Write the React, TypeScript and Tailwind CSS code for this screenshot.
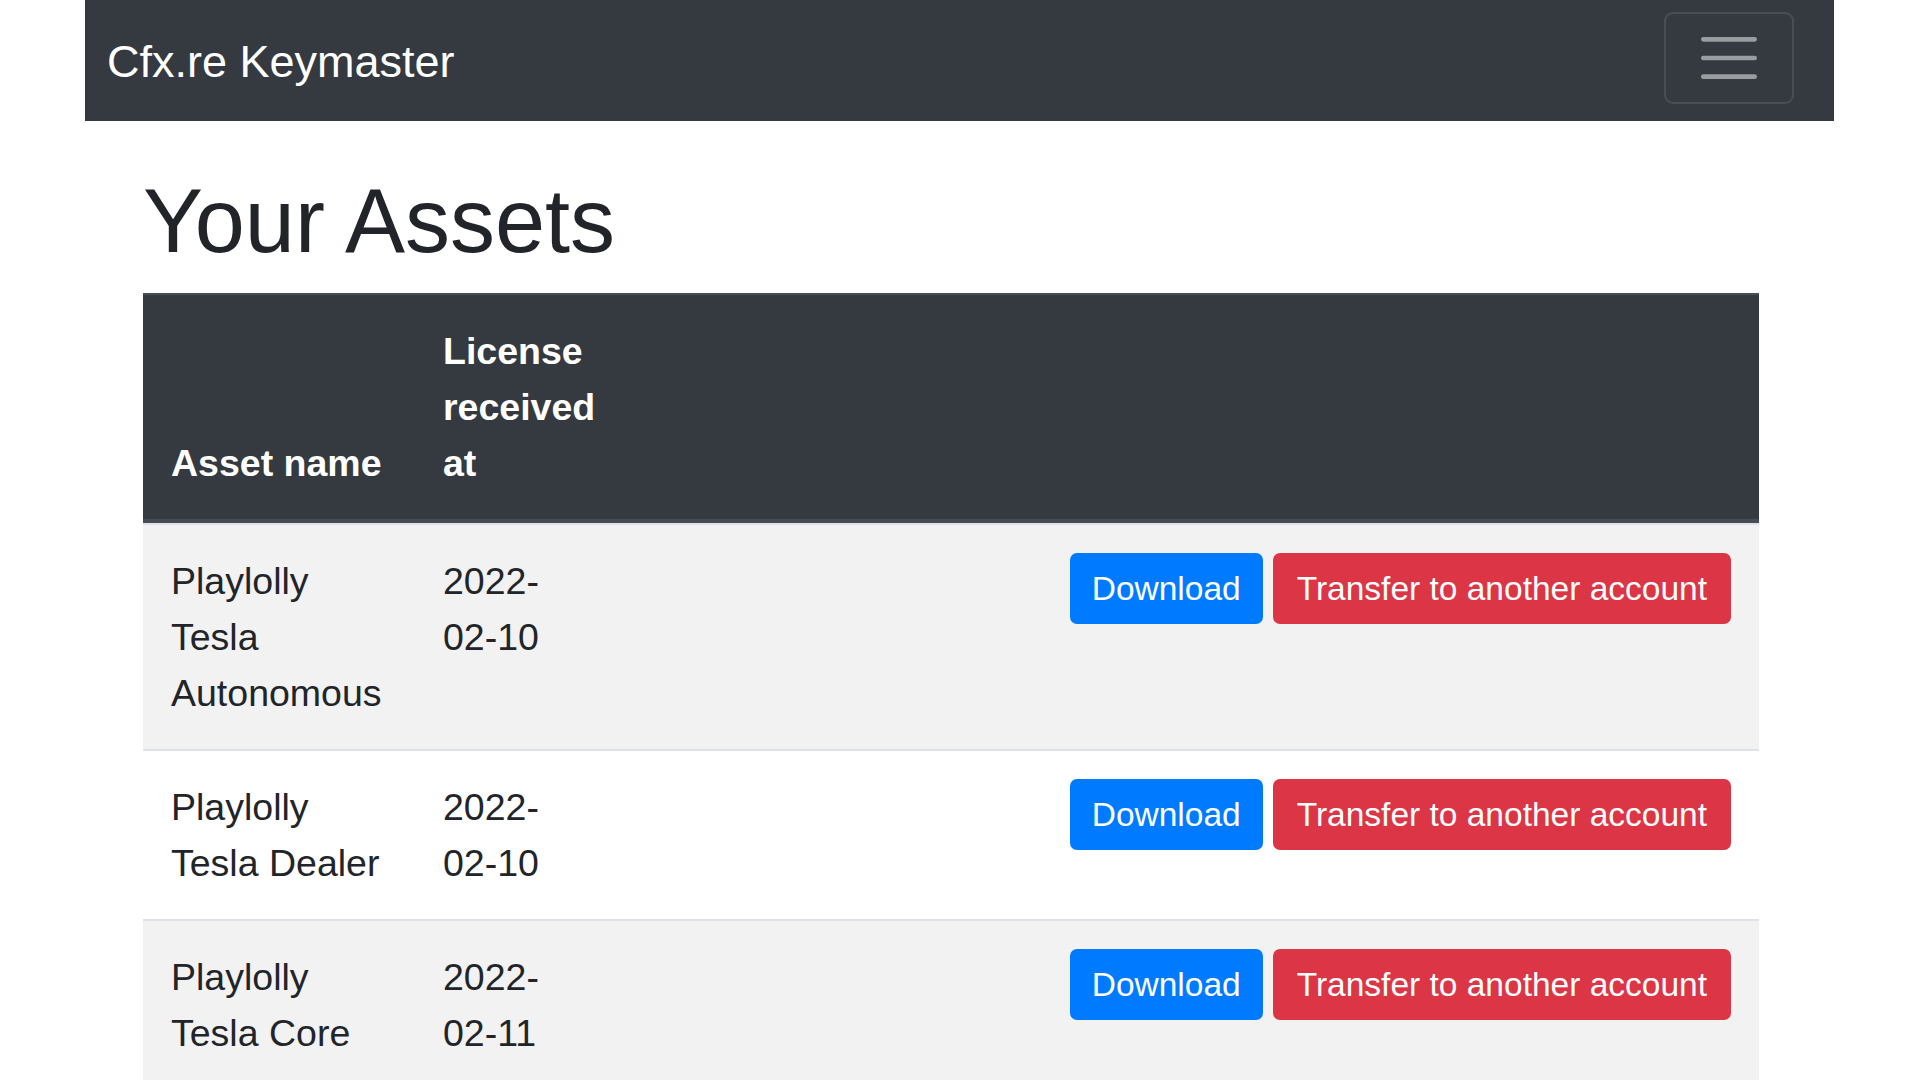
const assets = [
  { name: 'Playlolly Tesla Autonomous', date: '2022-02-10' },
  { name: 'Playlolly Tesla Dealer', date: '2022-02-10' },
  { name: 'Playlolly Tesla Core', date: '2022-02-11' }
];

// Year on one line, month-day on the next, as the narrow column wraps it
function DateCell({ date }: { date: string }) {
  const year = date.slice(0, 5);
  const rest = date.slice(5);
  return (
    <>
      <span className="whitespace-nowrap">{year}</span>
      <wbr />
      <span className="whitespace-nowrap">{rest}</span>
    </>
  );
}

export default function App() {
  return (
    <div className="min-h-screen bg-white font-['Liberation_Sans',Arial,sans-serif] text-[#212529]">
      {/* Navbar */}
      <nav className="ml-[85px] w-[1749px] h-[121px] bg-[#343a40] flex items-start justify-between pl-[22px] pr-[40px]">
        <a href="#" className="mt-[28px] text-white text-[45px] leading-[67px] whitespace-nowrap">
          Cfx.re Keymaster
        </a>
        <button className="mt-[12px] w-[130px] h-[92px] flex items-center justify-center border-2 border-white/10 rounded-[9px]">
          <svg width="70" height="70" viewBox="0 0 30 30" fill="none">
            <path
              d="M4 7h22M4 15h22M4 23h22"
              stroke="rgba(255,255,255,0.5)"
              strokeWidth="2"
              strokeLinecap="round"
              strokeMiterlimit="10"
            />
          </svg>
        </button>
      </nav>

      {/* Content */}
      <div className="ml-[143px] w-[1616px]">
        <h1 className="mt-[46px] mb-[18px] text-[90px] leading-[1.2] font-medium">Your Assets</h1>

        <table className="w-full table-fixed border-separate border-spacing-0 text-[37.5px] leading-[56px]">
          <thead>
            <tr className="bg-[#343a40] text-white">
              <th className="w-[272px] p-[28px] text-left align-bottom font-bold border-t-2 border-b-4 border-[#454d55]">
                Asset name
              </th>
              <th className="w-[216px] p-[28px] text-left align-bottom font-bold border-t-2 border-b-4 border-[#454d55]">
                License received at
              </th>
              <th className="p-[28px] border-t-2 border-b-4 border-[#454d55]"></th>
            </tr>
          </thead>
          <tbody>
            {assets.map((asset, index) => (
              <tr key={index} className={index % 2 === 0 ? 'bg-[#f2f2f2]' : 'bg-white'}>
                <td className="p-[28px] align-top border-t-2 border-[#dee2e6]">{asset.name}</td>
                <td className="p-[28px] align-top border-t-2 border-[#dee2e6]">
                  <DateCell date={asset.date} />
                </td>
                <td className="p-[28px] align-top text-right border-t-2 border-[#dee2e6]">
                  <div className="flex justify-end gap-[10px]">
                    <button className="px-[20px] py-[9px] text-[33.5px] leading-[49px] text-white bg-[#007bff] border-2 border-[#007bff] rounded-[7px] whitespace-nowrap">
                      Download
                    </button>
                    <button className="px-[22px] py-[9px] text-[33.5px] leading-[49px] text-white bg-[#dc3545] border-2 border-[#dc3545] rounded-[7px] whitespace-nowrap">
                      Transfer to another account
                    </button>
                  </div>
                </td>
              </tr>
            ))}
          </tbody>
        </table>
      </div>
    </div>
  );
}
